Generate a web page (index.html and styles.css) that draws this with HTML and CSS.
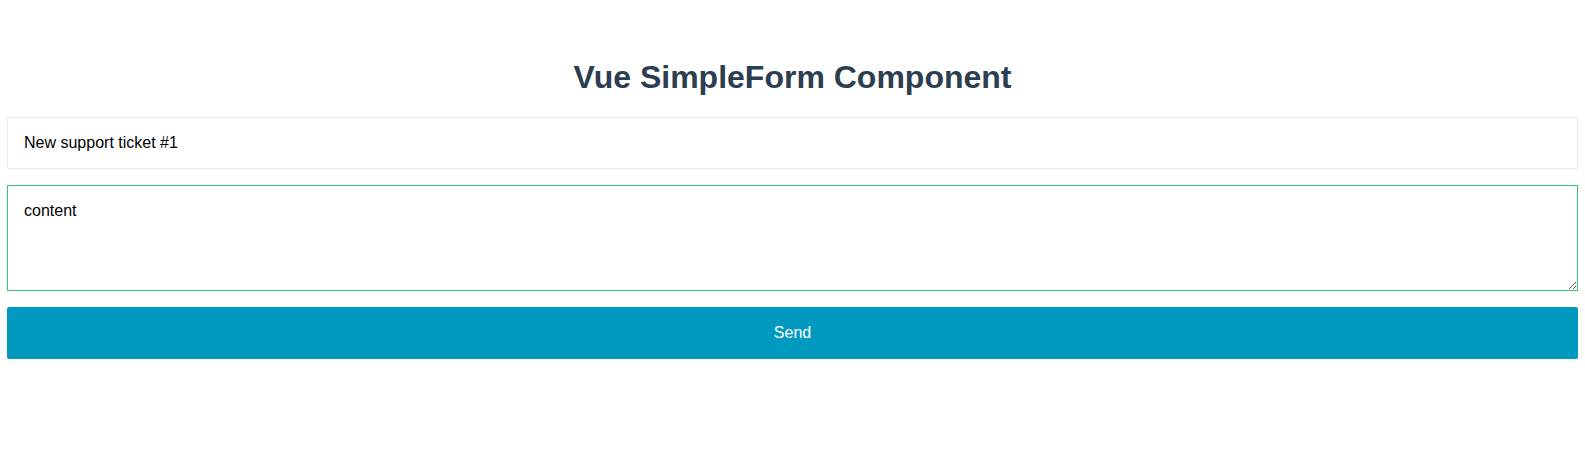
FILE: index.html
```html
<!DOCTYPE html>
<html lang="en">
<head>
<meta charset="utf-8">
<title>Vue SimpleForm Component</title>
<link rel="stylesheet" href="styles.css">
</head>
<body>
<div class="app">
  <h1 class="title">Vue SimpleForm Component</h1>
  <form class="form">
    <input class="field" type="text" value="New support ticket #1">
    <textarea class="field area">content</textarea>
    <button class="send" type="button">Send</button>
  </form>
</div>
</body>
</html>
```
FILE: styles.css
```css
html, body {
  margin: 0;
  padding: 0;
  background: #ffffff;
}
.app {
  font-family: "Liberation Sans", Arial, sans-serif;
  padding: 0 7px;
}
.title {
  margin: 0 0 21px;
  padding-top: 59px;
  font-size: 32px;
  line-height: 37px;
  font-weight: bold;
  color: #2c3e50;
  text-align: center;
}
.form {
  display: flex;
  flex-direction: column;
  gap: 16px;
}
.field {
  box-sizing: border-box;
  width: 100%;
  margin: 0;
  height: 52px;
  padding: 16px;
  border: 1px solid #e8ebed;
  border-radius: 2px;
  font-family: "Liberation Sans", Arial, sans-serif;
  font-size: 16px;
  line-height: 18px;
  color: #000000;
  background: #ffffff;
  outline: none;
}
.area {
  height: 106px;
  padding: 16px;
  border-color: #2ecc71;
  border-radius: 0;
  resize: vertical;
  display: block;
}
.send {
  box-sizing: border-box;
  width: 100%;
  height: 52px;
  margin: 0;
  border: none;
  border-radius: 2px;
  background: #0099bf;
  color: #ffffff;
  font-family: "Liberation Sans", Arial, sans-serif;
  font-size: 16px;
  cursor: pointer;
}
```
